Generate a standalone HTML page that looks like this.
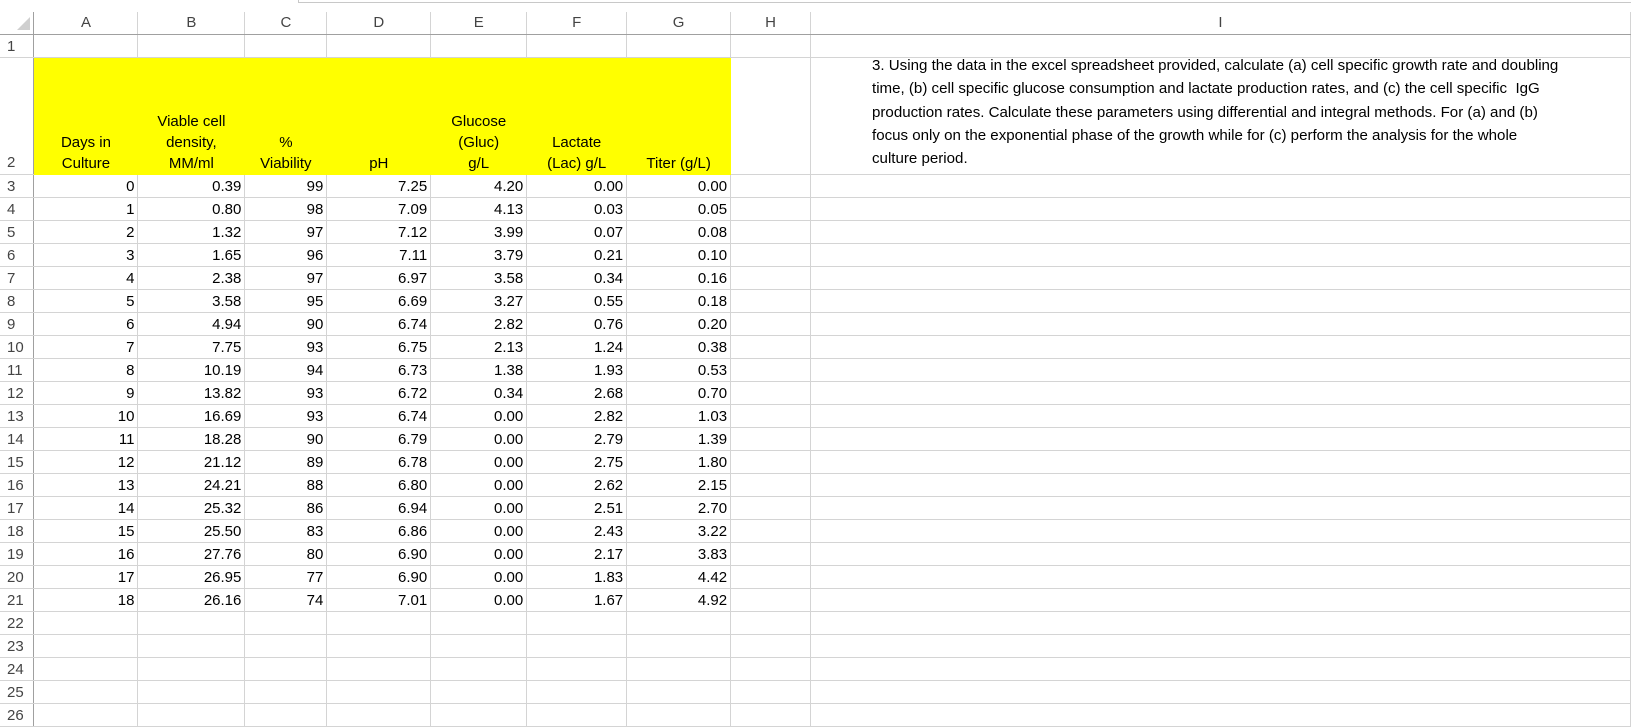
<!DOCTYPE html>
<html><head><meta charset="utf-8"><style>
html,body{margin:0;padding:0;background:#fff;width:1631px;height:695px;overflow:hidden;font-family:"Liberation Sans",Arial,sans-serif;}
.topline{position:absolute;left:298px;top:2px;width:1333px;height:1px;background:#c8c8c8;}
.topline2{position:absolute;left:298px;top:0;width:1px;height:3px;background:#c8c8c8;}
table{position:absolute;left:0;top:12px;border-collapse:collapse;table-layout:fixed;}
td{border:1px solid #d4d4d4;padding:0 3px 1px 3px;font-size:15px;color:#000;white-space:nowrap;overflow:visible;vertical-align:bottom;text-align:right;line-height:18px;}
tr.h td{height:21px;text-align:center;color:#444;vertical-align:middle;border-top:none;border-bottom:1px solid #a0a0a0;font-size:15px;}
td.rh{text-align:left;padding-left:7px;color:#444;border-right:1px solid #a0a0a0;border-left:none;}
tr.r td{height:21px;}
tr.y td.c{background:#ffff00;border-color:#ffff00;text-align:center;line-height:21px;padding-bottom:0;}
.note{position:absolute;left:872px;top:54px;font-family:"Liberation Sans",sans-serif;font-size:15.1px;line-height:23.3px;color:#000;white-space:nowrap;}
.tri{position:absolute;left:17px;top:17px;width:0;height:0;border-left:13px solid transparent;border-bottom:13px solid #cfcfcf;}
</style></head><body>
<div class="topline"></div><div class="topline2"></div>
<table>
<colgroup><col style="width:34px"><col style="width:104px"><col style="width:107px"><col style="width:82px"><col style="width:104px"><col style="width:96px"><col style="width:100px"><col style="width:104px"><col style="width:80px"><col style="width:821px"></colgroup>
<tr class="h"><td style="border-left:none;border-right:1px solid #a0a0a0"></td><td>A</td><td>B</td><td>C</td><td>D</td><td>E</td><td>F</td><td>G</td><td>H</td><td>I</td></tr>
<tr class="r"><td class="rh">1</td><td></td><td></td><td></td><td></td><td></td><td></td><td></td><td></td><td></td></tr>
<tr class="y"><td class="rh" style="height:115px;line-height:20px">2</td><td class="c">Days in<br>Culture</td><td class="c">Viable cell<br>density,<br>MM/ml</td><td class="c">%<br>Viability</td><td class="c">pH</td><td class="c">Glucose<br>(Gluc)<br>g/L</td><td class="c">Lactate<br>(Lac) g/L</td><td class="c">Titer (g/L)</td><td></td><td></td></tr>
<tr class="r"><td class="rh">3</td><td>0</td><td>0.39</td><td>99</td><td>7.25</td><td>4.20</td><td>0.00</td><td>0.00</td><td></td><td></td></tr>
<tr class="r"><td class="rh">4</td><td>1</td><td>0.80</td><td>98</td><td>7.09</td><td>4.13</td><td>0.03</td><td>0.05</td><td></td><td></td></tr>
<tr class="r"><td class="rh">5</td><td>2</td><td>1.32</td><td>97</td><td>7.12</td><td>3.99</td><td>0.07</td><td>0.08</td><td></td><td></td></tr>
<tr class="r"><td class="rh">6</td><td>3</td><td>1.65</td><td>96</td><td>7.11</td><td>3.79</td><td>0.21</td><td>0.10</td><td></td><td></td></tr>
<tr class="r"><td class="rh">7</td><td>4</td><td>2.38</td><td>97</td><td>6.97</td><td>3.58</td><td>0.34</td><td>0.16</td><td></td><td></td></tr>
<tr class="r"><td class="rh">8</td><td>5</td><td>3.58</td><td>95</td><td>6.69</td><td>3.27</td><td>0.55</td><td>0.18</td><td></td><td></td></tr>
<tr class="r"><td class="rh">9</td><td>6</td><td>4.94</td><td>90</td><td>6.74</td><td>2.82</td><td>0.76</td><td>0.20</td><td></td><td></td></tr>
<tr class="r"><td class="rh">10</td><td>7</td><td>7.75</td><td>93</td><td>6.75</td><td>2.13</td><td>1.24</td><td>0.38</td><td></td><td></td></tr>
<tr class="r"><td class="rh">11</td><td>8</td><td>10.19</td><td>94</td><td>6.73</td><td>1.38</td><td>1.93</td><td>0.53</td><td></td><td></td></tr>
<tr class="r"><td class="rh">12</td><td>9</td><td>13.82</td><td>93</td><td>6.72</td><td>0.34</td><td>2.68</td><td>0.70</td><td></td><td></td></tr>
<tr class="r"><td class="rh">13</td><td>10</td><td>16.69</td><td>93</td><td>6.74</td><td>0.00</td><td>2.82</td><td>1.03</td><td></td><td></td></tr>
<tr class="r"><td class="rh">14</td><td>11</td><td>18.28</td><td>90</td><td>6.79</td><td>0.00</td><td>2.79</td><td>1.39</td><td></td><td></td></tr>
<tr class="r"><td class="rh">15</td><td>12</td><td>21.12</td><td>89</td><td>6.78</td><td>0.00</td><td>2.75</td><td>1.80</td><td></td><td></td></tr>
<tr class="r"><td class="rh">16</td><td>13</td><td>24.21</td><td>88</td><td>6.80</td><td>0.00</td><td>2.62</td><td>2.15</td><td></td><td></td></tr>
<tr class="r"><td class="rh">17</td><td>14</td><td>25.32</td><td>86</td><td>6.94</td><td>0.00</td><td>2.51</td><td>2.70</td><td></td><td></td></tr>
<tr class="r"><td class="rh">18</td><td>15</td><td>25.50</td><td>83</td><td>6.86</td><td>0.00</td><td>2.43</td><td>3.22</td><td></td><td></td></tr>
<tr class="r"><td class="rh">19</td><td>16</td><td>27.76</td><td>80</td><td>6.90</td><td>0.00</td><td>2.17</td><td>3.83</td><td></td><td></td></tr>
<tr class="r"><td class="rh">20</td><td>17</td><td>26.95</td><td>77</td><td>6.90</td><td>0.00</td><td>1.83</td><td>4.42</td><td></td><td></td></tr>
<tr class="r"><td class="rh">21</td><td>18</td><td>26.16</td><td>74</td><td>7.01</td><td>0.00</td><td>1.67</td><td>4.92</td><td></td><td></td></tr>
<tr class="r"><td class="rh">22</td><td></td><td></td><td></td><td></td><td></td><td></td><td></td><td></td><td></td></tr>
<tr class="r"><td class="rh">23</td><td></td><td></td><td></td><td></td><td></td><td></td><td></td><td></td><td></td></tr>
<tr class="r"><td class="rh">24</td><td></td><td></td><td></td><td></td><td></td><td></td><td></td><td></td><td></td></tr>
<tr class="r"><td class="rh">25</td><td></td><td></td><td></td><td></td><td></td><td></td><td></td><td></td><td></td></tr>
<tr class="r"><td class="rh">26</td><td></td><td></td><td></td><td></td><td></td><td></td><td></td><td></td><td></td></tr>
</table>
<div class="tri"></div>
<div class="note">3. Using the data in the excel spreadsheet provided, calculate (a) cell specific growth rate and doubling<br>time, (b) cell specific glucose consumption and lactate production rates, and (c) the cell specific&nbsp; IgG<br>production rates. Calculate these parameters using differential and integral methods. For (a) and (b)<br>focus only on the exponential phase of the growth while for (c) perform the analysis for the whole<br>culture period.</div>
</body></html>
